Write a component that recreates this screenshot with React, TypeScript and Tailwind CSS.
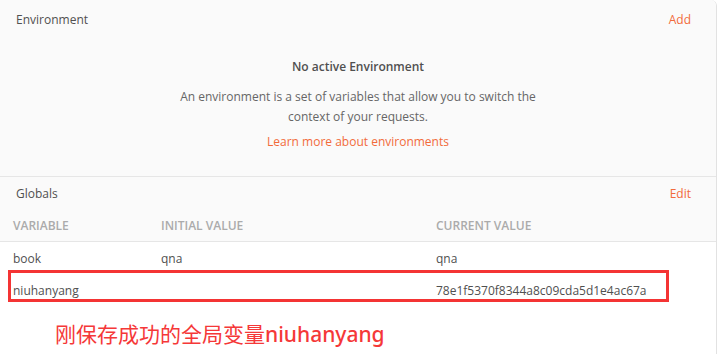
import React from "react";

export default function App() {
  return (
    <div
      className="relative w-[718px] h-[354px] overflow-hidden bg-white text-[12px] text-[#505050]"
      style={{ fontFamily: '"Open Sans", "Noto Sans", sans-serif' }}
    >
      <div className="w-[717px] h-full border-r border-[#e2e2e2] rounded-tr-[6px] flex flex-col">
        {/* Environment section */}
        <div className="h-[177px] bg-[#fafafa] border-b border-[#e6e6e6] rounded-tr-[6px] flex flex-col">
          <div className="flex justify-between pl-4 pr-[25px] pt-[12px] leading-[16px]">
            <span>Environment</span>
            <span className="text-[#f26b3a]">Add</span>
          </div>
          <div className="flex flex-col items-center text-center mt-[31px]">
            <div className="font-semibold leading-[16px] text-[#505050]">No active Environment</div>
            <div className="mt-[12px] leading-[20px] text-[#666]">
              An environment is a set of variables that allow you to switch the
              <br />
              context of your requests.
            </div>
            <div className="mt-[7px] leading-[16px] text-[#f26b3a]">Learn more about environments</div>
          </div>
        </div>
        {/* Globals section */}
        <div className="bg-[#fafafa] border-b border-[#e6e6e6] h-[65px] flex flex-col">
          <div className="flex justify-between pl-4 pr-[25px] pt-[9px] leading-[16px]">
            <span>Globals</span>
            <span className="text-[#f26b3a]">Edit</span>
          </div>
          <div className="grid grid-cols-[148px_275px_1fr] pl-[13px] mt-[16px] leading-[16px] font-semibold text-[#ababab]">
            <span>VARIABLE</span>
            <span>INITIAL VALUE</span>
            <span>CURRENT VALUE</span>
          </div>
        </div>
        <div className="bg-white flex flex-col">
          <div className="grid grid-cols-[148px_275px_1fr] pl-[13px] h-[32px] pt-[9px] leading-[16px]">
            <span>book</span>
            <span>qna</span>
            <span>qna</span>
          </div>
          <div className="grid grid-cols-[148px_275px_1fr] pl-[13px] h-[32px] pt-[9px] leading-[16px]">
            <span>niuhanyang</span>
            <span></span>
            <span>78e1f5370f8344a8c09cda5d1e4ac67a</span>
          </div>
          <div
            className="pl-[55px] mt-[13px] text-[21px] leading-[28px] text-[#f53838]"
            style={{ fontFamily: '"Noto Sans CJK SC", "Noto Sans", sans-serif' }}
          >
            刚保存成功的全局变量<span className="font-medium" style={{ fontFamily: '"Noto Sans", "Noto Sans CJK SC", sans-serif' }}>niuhanyang</span>
          </div>
        </div>
      </div>
      {/* annotation box */}
      <div className="absolute left-[8px] top-[270px] w-[661px] h-[32px] border-[3px] border-[#f43434]" />
    </div>
  );
}
